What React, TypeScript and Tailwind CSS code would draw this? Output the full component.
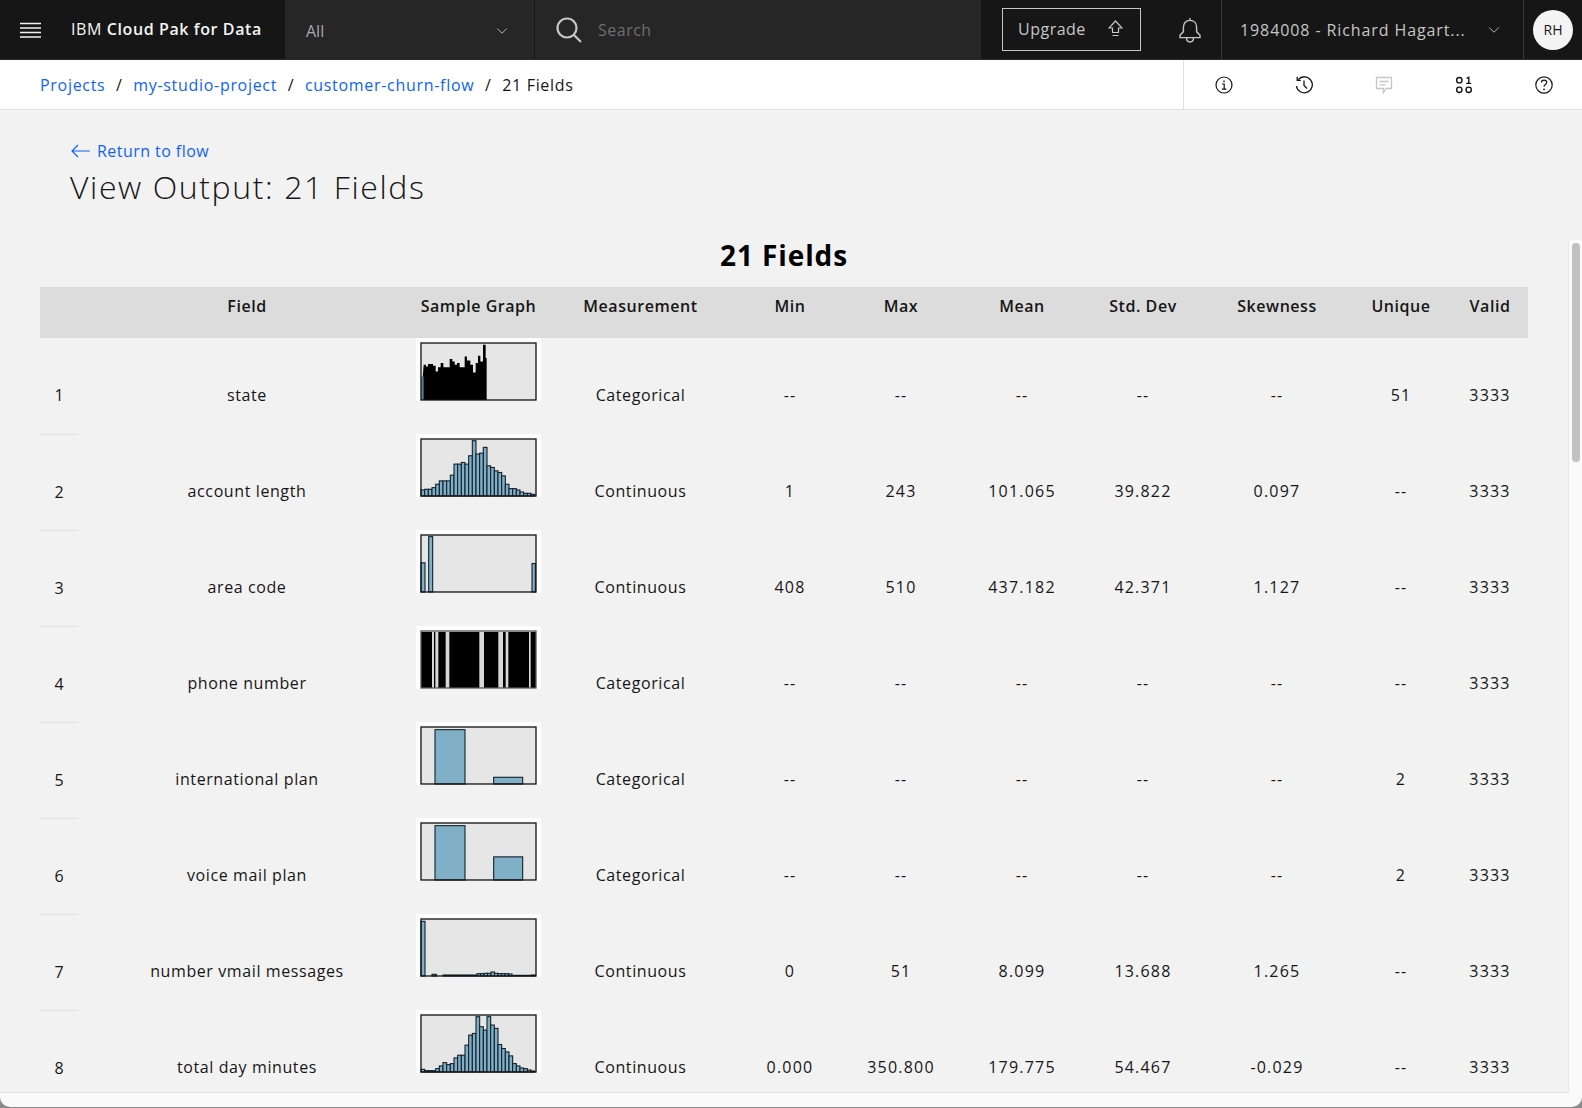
import React from 'react';
import { ChevronDown } from 'lucide-react';

type Bar = { x: number; w: number; h: number };

const FONT = "font-['Open_Sans',sans-serif]";

// bar heights read off the reference charts, 170 = full plot height
const series = (heights: number[], barWidth: number): Bar[] =>
  heights.map((h, i) => ({ x: i * barWidth, w: barWidth, h }));

const accountLength = series(
  [18, 20, 20, 25, 35, 45, 45, 45, 62, 95, 95, 100, 95, 120, 165, 125, 128, 145, 90, 85, 75, 70, 60, 35, 22, 22, 18, 12, 8, 8, 5],
  11
);
const dayMinutes = series(
  [8, 4, 4, 4, 10, 18, 28, 22, 25, 42, 50, 50, 80, 110, 115, 165, 135, 125, 165, 140, 130, 82, 70, 60, 48, 25, 18, 12, 10, 6, 3],
  11
);

// skyline of the solid block in the state chart: [right edge, height], same scale as above
const stateSteps = [
  [15, 105], [21, 100], [36, 107], [44, 102], [51, 85], [59, 98], [67, 110], [86, 98], [94, 122], [101, 115],
  [108, 105], [116, 110], [131, 98], [138, 130], [148, 118], [156, 105], [164, 82], [171, 110], [178, 132],
  [186, 115], [194, 165], [197, 125],
];

const statePath = () => {
  let d = 'M5 62 ';
  let x = 8;
  for (const [right, h] of stateSteps) {
    const y = 62 - (h * 57) / 170;
    d += `L${5 + x / 3} ${y} L${5 + right / 3} ${y} `;
    x = right;
  }
  return `${d}L${5 + x / 3} 62 Z`;
};

const StateChart = () => (
  <svg width="125" height="63" viewBox="0 0 125 63" className="block">
    <rect width="125" height="63" fill="#fdfdfd" />
    <rect x="5" y="5" width="115" height="57" fill="#e6e6e6" />
    <path d={statePath()} fill="#000" />
    <rect x="5" y={62 - (70 * 57) / 170} width="2.6" height={(70 * 57) / 170} fill="#5b8093" />
    <rect x="5" y="5" width="115" height="57" fill="none" stroke="#111" strokeWidth="1.3" />
  </svg>
);

const Chart = ({ bars = [], gaps = [], dark = false }: { bars?: Bar[]; gaps?: number[][]; dark?: boolean }) => (
  <svg width="125" height="63" viewBox="0 0 125 63" className="block">
    <rect width="125" height="63" fill="#fdfdfd" />
    <rect x="5" y="5" width="115" height="57" fill="#e6e6e6" />
    {dark && <rect x="5" y="6" width="115" height="56" fill="#000" />}
    {gaps.map(([from, to]) => (
      <rect key={from} x={5 + from / 3} y="6" width={(to - from) / 3} height="56" fill="#d8d8d8" />
    ))}
    {bars.map((b, i) => (
      <rect
        key={i}
        x={5 + b.x / 3}
        y={62 - (b.h * 57) / 170}
        width={b.w / 3}
        height={(b.h * 57) / 170}
        fill="#7fb0c8"
        stroke="#14202a"
        strokeWidth="1.1"
      />
    ))}
    <rect x="5" y="5" width="115" height="57" fill="none" stroke={dark ? '#555' : '#111'} strokeWidth="1.3" />
  </svg>
);

const charts: React.ReactNode[] = [
  <StateChart />,
  <Chart bars={accountLength} />,
  <Chart bars={[{ x: 0, w: 12, h: 87 }, { x: 23, w: 12, h: 165 }, { x: 333, w: 10, h: 85 }]} />,
  <Chart dark gaps={[[33, 39], [43, 52], [74, 85], [175, 189], [232, 246], [254, 262], [324, 329]]} />,
  <Chart bars={[{ x: 42, w: 90, h: 162 }, { x: 218, w: 87, h: 20 }]} />,
  <Chart bars={[{ x: 42, w: 90, h: 162 }, { x: 218, w: 87, h: 69 }]} />,
  <Chart
    bars={[
      { x: 0, w: 12, h: 163 },
      { x: 33, w: 13, h: 5 },
      { x: 66, w: 100, h: 3 },
      ...series([7, 7, 8, 8, 12, 8, 7, 7, 7, 6], 10.5).map((b) => ({ ...b, x: b.x + 168 })),
      { x: 276, w: 55, h: 2 },
      { x: 331, w: 12, h: 3 },
    ]}
  />,
  <Chart bars={dayMinutes} />,
];

const rows = [
  ['state', 'Categorical', '--', '--', '--', '--', '--', '51', '3333'],
  ['account length', 'Continuous', '1', '243', '101.065', '39.822', '0.097', '--', '3333'],
  ['area code', 'Continuous', '408', '510', '437.182', '42.371', '1.127', '--', '3333'],
  ['phone number', 'Categorical', '--', '--', '--', '--', '--', '--', '3333'],
  ['international plan', 'Categorical', '--', '--', '--', '--', '--', '2', '3333'],
  ['voice mail plan', 'Categorical', '--', '--', '--', '--', '--', '2', '3333'],
  ['number vmail messages', 'Continuous', '0', '51', '8.099', '13.688', '1.265', '--', '3333'],
  ['total day minutes', 'Continuous', '0.000', '350.800', '179.775', '54.467', '-0.029', '--', '3333'],
];

const IconInfo = () => (
  <svg width="20" height="20" viewBox="0 0 20 20" fill="none" stroke="#161616" strokeWidth="1.2">
    <circle cx="10" cy="10" r="8" />
    <path d="M8 9h2.2v5M7.8 14.2h4.6" />
    <circle cx="10" cy="6.3" r="0.9" fill="#161616" stroke="none" />
  </svg>
);

const IconHistory = () => (
  <svg width="20" height="20" viewBox="0 0 20 20" fill="none" stroke="#161616" strokeWidth="1.3">
    <path d="M4.2 4.6A8 8 0 1 1 2.4 11" />
    <path d="M3.2 1.8v3.6h3.6" />
    <path d="M10 5.5v5l3 3" />
  </svg>
);

const IconChat = () => (
  <svg width="20" height="20" viewBox="0 0 20 20" fill="none" stroke="#c6c6c6" strokeWidth="1.3">
    <path d="M2.5 2.5h15v11h-5.5l-2.5 4v-4h-7z" />
    <path d="M5.5 6.5h9M5.5 9.8h6" />
  </svg>
);

const IconData = () => (
  <svg width="20" height="20" viewBox="0 0 20 20" fill="none" stroke="#161616" strokeWidth="1.4">
    <circle cx="5.3" cy="5.2" r="2.7" />
    <circle cx="5.3" cy="14.8" r="2.7" />
    <circle cx="14.7" cy="14.8" r="2.7" />
    <path d="M12.6 3.4l2.2-1v6M12.2 8.4h5" />
  </svg>
);

const IconHelp = () => (
  <svg width="20" height="20" viewBox="0 0 20 20" fill="none" stroke="#161616" strokeWidth="1.2">
    <circle cx="10" cy="10" r="8.2" />
    <path d="M7.4 7.6c0-1.5 1.2-2.4 2.7-2.4s2.6 1 2.6 2.3c0 2.2-2.7 2-2.7 4.3" />
    <circle cx="10" cy="14.4" r="0.9" fill="#161616" stroke="none" />
  </svg>
);

const MenuIcon = () => (
  <svg width="21" height="16" viewBox="0 0 21 16" fill="none" stroke="#f4f4f4" strokeWidth="1.3">
    <path d="M0 1.5h21M0 6h21M0 10.5h21M0 15h21" />
  </svg>
);

const SearchIcon = () => (
  <svg width="26" height="26" viewBox="0 0 26 26" fill="none" stroke="#c6c6c6" strokeWidth="2.2">
    <circle cx="11" cy="11" r="9.5" />
    <path d="M18 18l7 7" />
  </svg>
);

const BellIcon = () => (
  <svg width="24" height="26" viewBox="0 0 24 26" fill="none" stroke="#c6c6c6" strokeWidth="1.4">
    <path d="M12 1v2.4M12 3.4c-4.4 0-6.6 3.2-6.6 7v4.2L2 18.2v2.4h20v-2.4l-3.4-3.6v-4.2c0-3.8-2.2-7-6.6-7z" />
    <path d="M8.6 20.6v1a3.4 3.4 0 0 0 6.8 0v-1" />
  </svg>
);

const UpgradeIcon = () => (
  <svg width="15" height="17" viewBox="0 0 15 17" fill="none" stroke="#c6c6c6" strokeWidth="1.2">
    <path d="M7.5 1L1 8h3.5v4.5h6V8H14zM4.5 15.5h6" />
  </svg>
);

const LeftArrow = () => (
  <svg width="19" height="14" viewBox="0 0 19 14" fill="none" stroke="#0f62fe" strokeWidth="1.2">
    <path d="M7 1L1 7l6 6M1 7h18" />
  </svg>
);

const heads = ['', 'Field', 'Sample Graph', 'Measurement', 'Min', 'Max', 'Mean', 'Std. Dev', 'Skewness', 'Unique', 'Valid'];
const colWidths = [
  'w-[38px]',
  'w-[338px]',
  'w-[125px]',
  'w-[199px]',
  'w-[100px]',
  'w-[122px]',
  'w-[120px]',
  'w-[122px]',
  'w-[146px]',
  'w-[102px]',
  'w-[76px]',
];

export default function App() {
  return (
    <div className={`${FONT} relative h-[1108px] w-full overflow-hidden bg-[#8a8a8a] text-[#161616]`}>
      <div className="flex h-[1107px] flex-col overflow-hidden rounded-b-[10px] bg-[#fafafa]">
        <header className="flex h-[60px] shrink-0 items-stretch border-b border-[#2a2a2a] bg-[#161616]">
          <div className="flex w-[285px] items-center">
            <div className="ml-[20px] flex w-[51px]">
              <MenuIcon />
            </div>
            <div className="pb-[2px] text-[16px] tracking-[0.6px] whitespace-nowrap text-[#f4f4f4]">
              IBM <span className="font-semibold">Cloud Pak for Data</span>
            </div>
          </div>
          <div className="flex w-[250px] items-center justify-between border-r border-[#161616] bg-[#262626] pl-[21px] pr-[23px] text-[16px] text-[#a8a8a8]">
            <span className="pt-[2px]">All</span>
            <ChevronDown size={18} strokeWidth={1.2} className="mt-[3px] text-[#c6c6c6]" />
          </div>
          <div className="flex w-[446px] items-center gap-[16px] bg-[#262626] pl-[21px] text-[16px] tracking-[0.5px] text-[#6f6f6f]">
            <SearchIcon />
            <span>Search</span>
          </div>
          <div className="flex w-[240px] items-center">
            <button className="ml-[21px] flex h-[43px] w-[139px] items-center justify-between border border-[#c6c6c6] pb-[2px] pl-[15px] pr-[17px] text-[16px] tracking-[0.5px] text-[#c6c6c6]">
              Upgrade
              <UpgradeIcon />
            </button>
            <div className="ml-[37px]">
              <BellIcon />
            </div>
          </div>
          <div className="flex w-[302px] items-center border-l border-[#393939] pl-[18px] text-[16px] tracking-[0.9px] text-[#c6c6c6]">
            <span className="w-[245px] whitespace-nowrap">1984008 - Richard Hagart...</span>
            <ChevronDown size={18} strokeWidth={1.2} />
          </div>
          <div className="flex flex-1 items-center border-l border-[#393939] pl-[9px]">
            <div className="flex h-[40px] w-[40px] items-center justify-center rounded-full bg-[#f4f4f4] text-[14px] text-[#161616]">
              RH
            </div>
          </div>
        </header>

        <div className="flex h-[50px] shrink-0 items-stretch border-b border-[#e0e0e0] bg-white">
          <nav className="flex w-[1183px] items-center gap-[10.6px] pl-[40px] text-[16px] tracking-[0.7px]">
            <a className="text-[#0f62fe]">Projects</a>
            <span>/</span>
            <a className="text-[#0f62fe]">my-studio-project</a>
            <span>/</span>
            <a className="text-[#0f62fe]">customer-churn-flow</a>
            <span>/</span>
            <span>21 Fields</span>
          </nav>
          <div className="flex flex-1 items-center justify-between border-l border-[#e0e0e0] pl-[30px] pr-[28px]">
            <IconInfo />
            <IconHistory />
            <IconChat />
            <IconData />
            <IconHelp />
          </div>
        </div>

        <main className="h-[983px] shrink-0 overflow-hidden border-b border-[#e0e0e0] bg-[#f2f2f2] pt-[29px]">
          <a className="ml-[71px] flex items-center gap-[7px] text-[16px] leading-[24px] tracking-[0.45px] text-[#0f62fe]">
            <LeftArrow />
            Return to flow
          </a>
          <h1 className="ml-[70px] mt-[4px] text-[32px] font-[350] leading-[40px] tracking-[1.6px]">
            View Output: 21 Fields
          </h1>
          <table className="ml-[40px] mt-[30px] w-[1488px] table-fixed text-center text-[16px]">
            <caption className="pb-[14px] text-[28px] font-bold leading-[36px] tracking-[0.9px] text-black">
              21 Fields
            </caption>
            <thead>
              <tr className="h-[51px] bg-[#dcdcdc]">
                {heads.map((h, i) => (
                  <th key={i} className={`${colWidths[i]} pt-[7px] align-top font-semibold leading-[24px] tracking-[0.55px]`}>
                    {h}
                  </th>
                ))}
              </tr>
            </thead>
            <tbody>
              {rows.map((r, i) => (
                <tr key={r[0]} className="h-[96px]">
                  <td className="border-b border-[#e0e0e0] pt-[45px] align-top leading-[24px]">{i + 1}</td>
                  <td className="pt-[45px] align-top leading-[24px] tracking-[0.6px]">{r[0]}</td>
                  <td className="align-top">{charts[i]}</td>
                  <td className="pt-[45px] align-top leading-[24px] tracking-[0.6px]">{r[1]}</td>
                  {r.slice(2).map((v, j) => (
                    <td key={j} className="pt-[45px] align-top leading-[24px] tracking-[1.2px]">
                      {v}
                    </td>
                  ))}
                </tr>
              ))}
            </tbody>
          </table>
        </main>
      </div>

      {/* scrollbar sits on top of the scrolled area */}
      <div className="absolute left-[1568px] top-[240px] h-[853px] w-[14px] border-l border-[#e8e8e8] bg-[#fafafa]">
        <div className="ml-[3px] mt-[3px] h-[219px] w-[8px] rounded-full bg-[#c1c1c1]" />
      </div>
    </div>
  );
}
